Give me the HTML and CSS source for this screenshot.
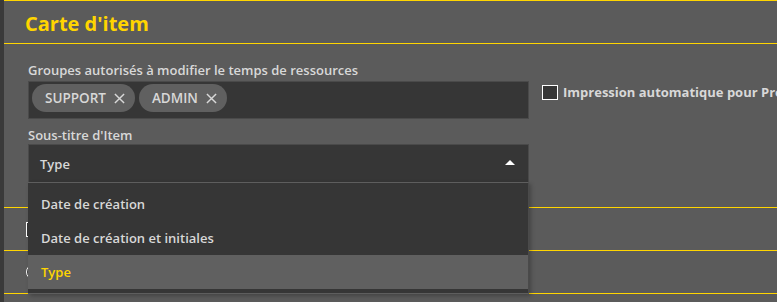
FILE: index.html
```html
<!DOCTYPE html>
<html lang="fr">
<head>
  <meta charset="UTF-8" />
  <title>Carte d'item</title>
  <link rel="stylesheet" href="styles.css">
</head>
<body>
  <div class="app">
    <aside class="rail"></aside>
    <main class="panel">
      <header class="panel-head">
        <h1>Carte d'item</h1>
      </header>

      <!-- champs principaux -->
      <section class="panel-body">
        <div class="row">
          <div class="field">
            <label class="field-label">Groupes autorisés à modifier le temps de ressources</label>
            <div class="tags">
              <span class="chip"><span>SUPPORT</span><svg class="chip-x" viewBox="0 0 12 12"><path d="M1 1L11 11M11 1L1 11"/></svg></span>
              <span class="chip"><span>ADMIN</span><svg class="chip-x" viewBox="0 0 12 12"><path d="M1 1L11 11M11 1L1 11"/></svg></span>
            </div>

            <label class="field-label second">Sous-titre d'Item</label>
            <div class="select open">
              <div class="select-value">
                <span>Type</span>
                <span class="caret"></span>
              </div>
              <ul class="menu">
                <li>Date de création</li>
                <li>Date de création et initiales</li>
                <li class="selected">Type</li>
              </ul>
            </div>
          </div>

          <label class="check top">
            <span class="box"></span>
            Impression automatique pour Production
          </label>
        </div>
      </section>

      <!-- options sous le menu -->
      <section class="panel-sec">
        <label class="check"><span class="box"></span>Afficher le code-barres</label>
      </section>
      <section class="panel-sec">
        <label class="radio"><span class="dot"></span>Format compact</label>
      </section>
    </main>
  </div>
</body>
</html>
```

FILE: styles.css
```css
:root {
  --bg: #5b5b5b;
  --field: #363636;
  --chip: #606060;
  --text: #d8d8d8;
  --accent: #ffd500;
  --rail: #3a3a3a;
}

body {
  margin: 0;
  font-family: 'Open Sans', 'Noto Sans', sans-serif;
  background: var(--bg);
  color: var(--text);
  overflow: hidden;
}

.app {
  display: flex;
  min-height: 302px;
}

.rail {
  width: 4px;
  flex: none;
  background: var(--rail);
}

.panel {
  flex: 1;
  min-width: 0;
  border-top: 1px solid var(--accent);
}

.panel-head {
  height: 42px;
  box-sizing: border-box;
  padding: 3px 0 0 21px;
  border-bottom: 1px solid var(--accent);
  display: flex;
  align-items: center;
  height: 43px;
}

.panel-head h1 {
  margin: 0;
  font-size: 20px;
  font-weight: bold;
  color: var(--accent);
  line-height: 24px;
}

.panel-body {
  padding: 17px 0 25px 24px;
  border-bottom: 1px solid var(--accent);
}

.row {
  display: flex;
  align-items: flex-start;
  gap: 13px;
}

.field {
  width: 501px;
  flex: none;
}

.field-label {
  display: block;
  font-size: 13px;
  font-weight: 600;
  line-height: 18px;
  margin-bottom: 2px;
}

.field-label.second {
  margin-top: 7px;
  margin-bottom: 0;
}

.tags {
  height: 38px;
  box-sizing: border-box;
  background: var(--field);
  border: 1px solid #4a4a4a;
  padding: 2px 3px;
  display: flex;
  align-items: flex-start;
  gap: 4px;
}

.chip {
  height: 28px;
  display: inline-flex;
  align-items: center;
  gap: 8px;
  padding: 0 10px 0 13px;
  border-radius: 14px;
  background: var(--chip);
  font-size: 13.5px;
  font-weight: 600;
  color: var(--text);
}

.chip-x {
  width: 11px;
  height: 11px;
  stroke: var(--text);
  stroke-width: 1.6;
  fill: none;
}

.select {
  position: relative;
}

.select-value {
  height: 38px;
  box-sizing: border-box;
  background: var(--field);
  border: 1px solid #4a4a4a;
  border-bottom: none;
  padding: 0 13px 0 11px;
  display: flex;
  align-items: center;
  justify-content: space-between;
  font-size: 13px;
  font-weight: 600;
}

.caret {
  width: 0;
  height: 0;
  border-left: 5px solid transparent;
  border-right: 5px solid transparent;
  border-bottom: 5px solid #fff;
  margin-bottom: 2px;
}

.menu {
  position: absolute;
  left: 0;
  right: 0;
  top: 38px;
  z-index: 5;
  margin: 0;
  padding: 4px 0;
  list-style: none;
  background: var(--field);
  border-top: 1px solid #5e5e5e;
  border-bottom: 1px solid #5e5e5e;
  border-right: 1px solid #4a4a4a;
  box-shadow: 2px 2px 4px rgba(0,0,0,0.25);
}

.menu li {
  height: 34px;
  display: flex;
  align-items: center;
  padding-left: 13px;
  font-size: 13px;
  font-weight: 600;
  color: var(--text);
}

.menu li.selected {
  background: var(--chip);
  color: var(--accent);
}

.check, .radio {
  display: flex;
  align-items: center;
  gap: 5px;
  font-size: 13px;
  font-weight: bold;
  white-space: nowrap;
}

.check.top {
  margin-top: 22px;
}

.box {
  width: 14px;
  height: 13px;
  flex: none;
  border: 1px solid #fff;
  background: var(--field);
}

.dot {
  width: 14px;
  height: 14px;
  flex: none;
  border: 1px solid #fff;
  border-radius: 50%;
  background: var(--field);
}

.panel-sec {
  height: 42px;
  border-bottom: 1px solid var(--accent);
  padding-left: 22px;
  display: flex;
  align-items: center;
}
```
